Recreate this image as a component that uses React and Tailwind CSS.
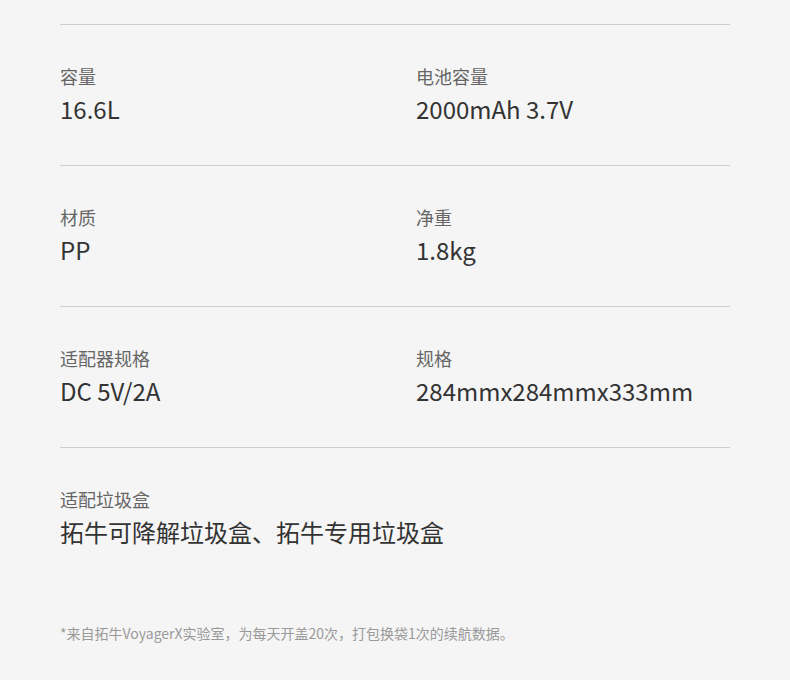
const specs = [
  [
    { label: "容量", value: "16.6L" },
    { label: "电池容量", value: "2000mAh 3.7V" },
  ],
  [
    { label: "材质", value: "PP" },
    { label: "净重", value: "1.8kg" },
  ],
  [
    { label: "适配器规格", value: "DC 5V/2A" },
    { label: "规格", value: "284mmx284mmx333mm" },
  ],
];

function Spec({ label, value, wide }) {
  return (
    <div className={wide ? "col-span-2" : ""}>
      <div className="text-[18px] leading-[26px] text-[#666]">{label}</div>
      <div className="mt-[3px] text-[24px] leading-[34px] text-[#333]">{value}</div>
    </div>
  );
}

export default function App() {
  return (
    <div
      className="min-h-[680px] bg-[#f5f5f5] px-[60px] pt-[24px]"
      style={{ fontFamily: '"Noto Sans CJK SC", "Noto Sans", sans-serif' }}
    >
      {specs.map((row, i) => (
        <div key={i} className="grid grid-cols-[356px_1fr] border-t border-[#cfcfcf] pt-[38px] pb-[39px]">
          {row.map((s) => (
            <Spec key={s.label} {...s} />
          ))}
        </div>
      ))}
      <div className="border-t border-[#cfcfcf] pt-[38px]">
        <Spec label="适配垃圾盒" value="拓牛可降解垃圾盒、拓牛专用垃圾盒" wide />
      </div>
      <p className="mt-[74px] text-[14px] leading-[20px] text-[#999]">
        *来自拓牛VoyagerX实验室，为每天开盖20次，打包换袋1次的续航数据。
      </p>
    </div>
  );
}
